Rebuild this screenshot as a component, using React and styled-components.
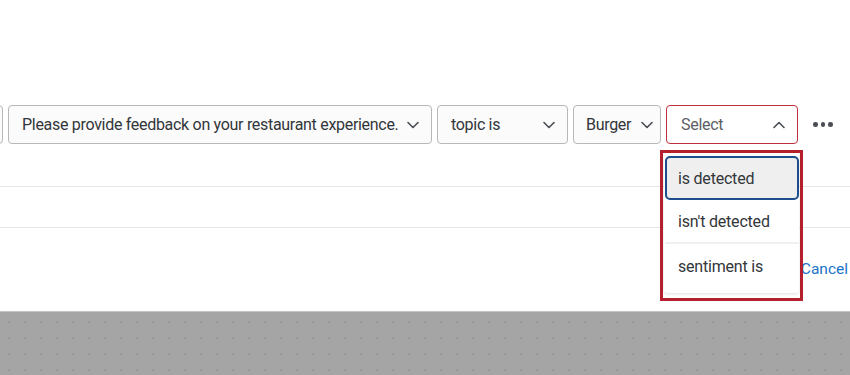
import React from 'react';
import styled, { createGlobalStyle } from 'styled-components';

const Global = createGlobalStyle`
  html, body { margin: 0; padding: 0; background: #fff; }
  body { font-family: Roboto, 'Liberation Sans', sans-serif; color: #32363a; overflow: hidden; }
`;

const Page = styled.div`
  width: 850px;
  height: 375px;
  display: flex;
  flex-direction: column;
  overflow: hidden;
`;

const Editor = styled.div`
  height: 311px;
  flex: none;
  background: #fff;
  display: flex;
  flex-direction: column;
  padding-top: 105px;
  box-sizing: border-box;
`;

const FilterRow = styled.div`
  display: flex;
  align-items: center;
  gap: 5px;
  margin-left: -37px;
  height: 39px;
`;

const SelectBox = styled.div`
  position: relative;
  box-sizing: border-box;
  height: 39px;
  width: ${p => p.$w}px;
  flex: none;
  display: flex;
  align-items: center;
  justify-content: space-between;
  padding: 0 ${p => p.$pr || 12}px 0 ${p => p.$pl || 13}px;
  border: 1px solid ${p => (p.$open ? '#c0303c' : '#b8b8b8')};
  border-radius: 4px;
  background: ${p => (p.$open ? '#fff' : '#fbfbfb')};
  font-size: 16px;
  letter-spacing: -0.3px;
  color: ${p => (p.$muted ? '#5c6066' : '#32363a')};
  white-space: nowrap;
`;

const Chevron = ({ up }) => (
  <svg width="12" height="8" viewBox="0 0 12 8" fill="none">
    <path
      d={up ? 'M1 6.5 L6 1.5 L11 6.5' : 'M1 1.5 L6 6.5 L11 1.5'}
      stroke="#4a4e54"
      strokeWidth="1.6"
      strokeLinecap="round"
      strokeLinejoin="round"
    />
  </svg>
);

const MoreButton = styled.div`
  margin-left: 10px;
  display: flex;
  gap: 3px;
  span {
    width: 4.5px;
    height: 4.5px;
    border-radius: 50%;
    background: #4a4e54;
  }
`;

const Divider = styled.div`
  height: 1px;
  background: #e6e6e6;
  margin-top: ${p => p.$mt}px;
`;

const Footer = styled.div`
  display: flex;
  justify-content: flex-end;
  margin-top: 32px;
  padding-right: 2px;
`;

const TextButton = styled.span`
  font-size: 15.5px;
  color: #1a73c9;
`;

const Highlight = styled.div`
  position: absolute;
  top: 44px;
  left: -7px;
  width: 135px;
  height: 143px;
  border: 3px solid #b5202e;
  padding: 1px;
  z-index: 5;
`;

const Menu = styled.div`
  background: #fff;
  box-shadow: 0 1px 3px rgba(0, 0, 0, 0.12);
  border-radius: 3px;
  height: 139px;
  display: flex;
  flex-direction: column;
  padding-top: 2px;
  box-sizing: border-box;
`;

const MenuItem = styled.div`
  box-sizing: border-box;
  height: 44px;
  margin: 0 0 0 1px;
  display: flex;
  align-items: center;
  padding-left: ${p => (p.$active ? 11 : 13)}px;
  font-size: 16px;
  letter-spacing: -0.2px;
  color: #32363a;
  background: ${p => (p.$active ? '#efefef' : '#fff')};
  border: ${p => (p.$active ? '2px solid #1d4d8a' : 'none')};
  border-radius: ${p => (p.$active ? '5px' : '0')};
  border-bottom: ${p => (p.$sep ? '2px solid #f0f0f0' : p.$active ? '2px solid #1d4d8a' : 'none')};
`;

const Canvas = styled.div`
  flex: 1;
  background-color: #a5a5a5;
  border-top: 1px solid #c4c4c4;
  background-image: radial-gradient(circle, #979797 1px, transparent 1.3px);
  background-size: 16px 16px;
  background-position: 1px 2px;
`;

export default function App() {
  return (
    <Page>
      <Global />
      <Editor>
        <FilterRow>
          <SelectBox $w={40} />
          <SelectBox $w={424} $pl={13} $pr={12}>
            Please provide feedback on your restaurant experience.
            <Chevron />
          </SelectBox>
          <SelectBox $w={131} $pl={13} $pr={12}>
            topic is
            <Chevron />
          </SelectBox>
          <SelectBox $w={88} $pl={12} $pr={7}>
            Burger
            <Chevron />
          </SelectBox>
          <SelectBox $w={132} $open $muted $pl={14} $pr={12}>
            Select
            <Chevron up />
            <Highlight>
              <Menu>
                <MenuItem $active>is detected</MenuItem>
                <MenuItem $sep>isn't detected</MenuItem>
                <MenuItem>sentiment is</MenuItem>
              </Menu>
            </Highlight>
          </SelectBox>
          <MoreButton>
            <span />
            <span />
            <span />
          </MoreButton>
        </FilterRow>
        <Divider $mt={42} />
        <Divider $mt={40} />
        <Footer>
          <TextButton>Cancel</TextButton>
        </Footer>
      </Editor>
      <Canvas />
    </Page>
  );
}
